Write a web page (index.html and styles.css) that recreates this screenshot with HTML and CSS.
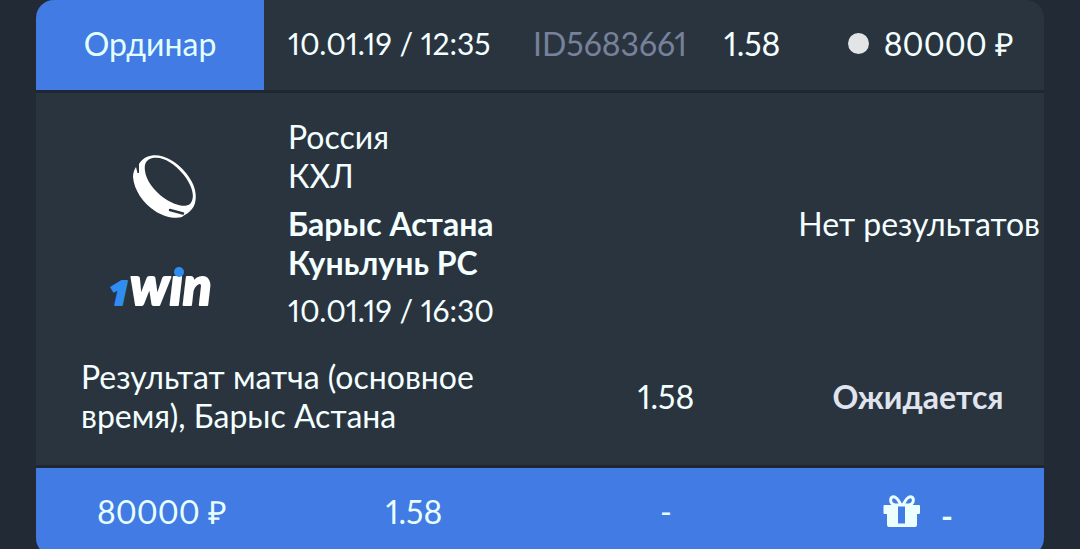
FILE: index.html
```html
<!DOCTYPE html>
<html lang="ru">
<head>
<meta charset="utf-8">
<meta name="viewport" content="width=device-width, initial-scale=1">
<title>Ординар</title>
<link rel="stylesheet" href="styles.css">
</head>
<body>
<main class="bet">
  <header class="bet-head">
    <span class="bet-type">Ординар</span>
    <time class="date">10.01.19 / 12:35</time>
    <span class="bet-id">ID5683661</span>
    <span class="bet-odds">1.58</span>
    <span class="bet-sum"><i class="dot"></i>80000 ₽</span>
  </header>

  <section class="bet-body">
    <div class="marks">
      <svg class="puck" viewBox="0 0 64 64" aria-hidden="true">
        <path fill="#fff" fill-rule="evenodd" d="M19 .5C30-1 43 6 53 18C61 28 64.500 38 62 48C61 53 56 58 50 61L49 62C43 64 32 62.500 22 56C10 48 1 35 0 22C0 18 1 15 3 12L4.500 18L6 18L6 9C9 4 13 1.500 19 .5ZM21 2.800C13 4 11 9 12 16C13 25 21 36 31 43C41 50 52 53 57 49C63 42 59 30 50 19C41 8 30 1.500 21 2.800Z"/>
        <path d="M37 55L50 58.500" stroke="#29343f" stroke-width="2.500" stroke-linecap="round"/>
      </svg>
      <svg class="logo" viewBox="0 0 104 44" role="img" aria-label="1win">
        <text class="logo-one" x="-1" y="38">1</text>
        <text class="logo-win" x="20" y="38">wın</text>
        <circle cx="69" cy="5" r="5" fill="#2f8df0"/>
      </svg>
    </div>
    <div class="match">
      <p>Россия<br>КХЛ</p>
      <p class="teams">Барыс Астана<br>Куньлунь РС</p>
      <time class="date">10.01.19 / 16:30</time>
    </div>
    <p class="result">Нет результатов</p>
    <p class="market">Результат матча (основное время), Барыс Астана</p>
    <p class="odds">1.58</p>
    <p class="status">Ожидается</p>
  </section>

  <footer class="bet-foot">
    <span>80000 ₽</span>
    <span>1.58</span>
    <span>-</span>
    <span class="bonus">
      <svg class="gift" viewBox="0 0 38 34" aria-hidden="true">
        <path fill="none" stroke="#ecffff" stroke-width="3" d="M18 11C15 5 12 2 9.500 3C7 4 7 8 9.500 10C12 11.500 15 11 18 11ZM20 11C23 5 26 2 28.500 3C31 4 31 8 28.500 10C26 11.500 23 11 20 11Z"/>
        <path fill="#ecffff" fill-rule="evenodd" d="M1.500 11H36Q37 11 37 12V19Q37 20 36 20H34V31Q34 33 32 33H6Q4 33 4 31V20H1.500Q.5 20 .5 19V12Q.5 11 1.500 11ZM15 12V29.500H22V12Z"/>
      </svg>
      <b>-</b>
    </span>
  </footer>
</main>
</body>
</html>
```
FILE: styles.css
```css
* {
  box-sizing: border-box;
}

body {
  height: 100vh;
  margin: 0;
  padding: 0 36px;
  overflow: hidden;
  background: #222b35;
  color: #f4ffff;
  font: 32px/39px Lato, "Open Sans", sans-serif;
  font-variant-numeric: proportional-nums;
}

p {
  margin: 0;
}

.bet {
  display: grid;
  gap: 3px;
  overflow: hidden;
  border-radius: 18px;
  background: #1f2832;
}

.bet-head {
  display: grid;
  grid-template-columns: 228fr 245fr 191fr 110fr 234fr;
  align-items: center;
  height: 90px;
  padding-bottom: 4px;
  background: #29343f;
  white-space: nowrap;
}

.bet-head > * {
  min-width: 0;
  padding-left: 24px;
}

.bet-head .bet-type {
  display: grid;
  place-items: center;
  align-self: stretch;
  margin-bottom: -4px;
  padding: 0 0 4px;
  background: #417be3;
  color: #e2ffff;
}

.date {
  font-size: 30px;
}

.bet-id {
  color: #77819a;
}

.bet-sum {
  display: flex;
  align-items: center;
  justify-content: flex-end;
  gap: 15px;
  padding-right: 30px;
}

.dot {
  width: 21px;
  height: 21px;
  border-radius: 50%;
  background: #e2e4e5;
}

.bet-body {
  display: grid;
  grid-template-columns: repeat(4, 1fr);
  align-items: center;
  row-gap: 27px;
  padding: 24px 0 30px;
  background: #29343f;
}

.marks {
  display: grid;
  justify-items: center;
  gap: 48px;
  padding-top: 18px;
}

.puck {
  width: 64px;
  height: 64px;
  margin-left: 6px;
}

.logo {
  width: 104px;
  height: 44px;
  overflow: visible;
}

.logo-one {
  fill: #2f8df0;
  stroke: #2f8df0;
  stroke-width: 2px;
  stroke-linejoin: round;
  font: italic 800 34px "Open Sans", sans-serif;
}

.logo-win {
  fill: #fff;
  stroke: #fff;
  stroke-width: 2px;
  stroke-linejoin: round;
  font: italic 900 53px Lato, sans-serif;
}

.match {
  display: grid;
  gap: 9px;
}

.teams,
.status {
  font-weight: 700;
}

.result {
  grid-column: 4;
  padding-right: 4px;
  text-align: right;
  white-space: nowrap;
}

.market {
  grid-column: span 2;
  padding-left: 45px;
}

.odds,
.status {
  text-align: center;
}

.status {
  color: #e0e4ee;
}

.bet-foot {
  display: grid;
  grid-template-columns: repeat(4, 1fr);
  place-items: center;
  height: 88px;
  padding-bottom: 2px;
  background: #417be3;
  color: #e8ffff;
}

.bonus {
  display: flex;
  align-items: center;
  gap: 20px;
}

.bonus b {
  padding-top: 8px;
}

.gift {
  width: 38px;
  height: 34px;
}
```
